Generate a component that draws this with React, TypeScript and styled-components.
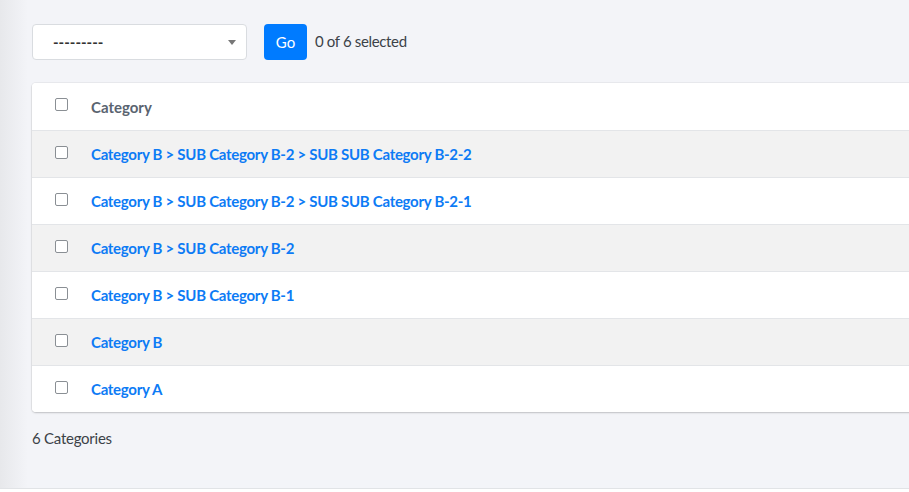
import React from "react";
import styled, { createGlobalStyle } from "styled-components";

const Global = createGlobalStyle`
  html, body { margin: 0; padding: 0; overflow: hidden; }
  body {
    background: #f3f4f8;
    font-family: "Lato", "Liberation Sans", sans-serif;
    color: #333a40;
  }
`;

const Page = styled.div`
  width: 909px;
  height: 492px;
  display: flex;
  overflow: hidden;
  background: #f3f4f8;
`;

const SideShade = styled.div`
  flex: 0 0 28px;
  background: linear-gradient(to right, #e7e8eb, #f3f4f8);
`;

const Main = styled.div`
  flex: 1;
  display: flex;
  flex-direction: column;
  padding: 24px 0 0 4px;
  min-width: 0;
`;

const Actions = styled.div`
  display: flex;
  align-items: center;
  height: 36px;
`;

const Select = styled.div`
  height: 34px;
  border: 1px solid #d9dce0;
  border-radius: 4px;
  background: #fff;
  display: flex;
  align-items: center;
  justify-content: space-between;
  padding: 0 10px 0 20px;
  box-sizing: content-box;
  width: 183px;
  font-size: 15px;
  font-weight: 700;
  color: #333;
`;

const Caret = styled.span`
  width: 0;
  height: 0;
  border-left: 4px solid transparent;
  border-right: 4px solid transparent;
  border-top: 5px solid #777;
`;

const GoButton = styled.button`
  margin-left: 17px;
  width: 43px;
  height: 36px;
  border: none;
  border-radius: 4px;
  background: #007bff;
  color: #fff;
  font-family: inherit;
  font-size: 15px;
  padding: 0;
`;

const Counter = styled.span`
  margin-left: 8px;
  font-size: 15px;
  letter-spacing: -0.35px;
  color: #3c4248;
  margin-top: -2px;
`;

const Card = styled.div`
  margin-top: 23px;
  margin-right: -30px;
  background: #fff;
  border-radius: 4px;
  box-shadow: 0 1px 2px rgba(0, 0, 0, 0.18), 0 0 0 1px rgba(0, 0, 0, 0.04);
  overflow: hidden;
`;

const Row = styled.div<{ $striped?: boolean; $first?: boolean }>`
  height: 47px;
  display: flex;
  align-items: center;
  background: ${(p) => (p.$striped ? "#f2f2f2" : "#fff")};
  border-top: ${(p) => (p.$first ? "none" : "1px solid #e3e5e8")};
  box-sizing: border-box;
`;

const CheckCell = styled.div`
  width: 59px;
  display: flex;
  justify-content: flex-start;
  padding-left: 23px;
  box-sizing: border-box;
  margin-top: -4px;
`;

const Check = styled.span`
  width: 11px;
  height: 11px;
  border: 1px solid #8a8f94;
  border-radius: 2px;
  background: #fff;
`;

const HeaderText = styled.span`
  font-size: 15px;
  font-weight: 700;
  color: #5a6470;
`;

const Link = styled.a`
  font-size: 15px;
  font-weight: 700;
  letter-spacing: -0.28px;
  color: #0d7bf5;
  text-decoration: none;
  margin-top: -1px;
`;

const Footer = styled.div`
  margin-top: 17px;
  font-size: 15px;
  letter-spacing: -0.25px;
  color: #3c4248;
`;

const BottomLine = styled.div`
  margin-top: auto;
  margin-left: -32px;
  height: 3px;
  border-top: 1px solid #e1e3e6;
  background: #fff;
`;

const rows = [
  "Category B > SUB Category B-2 > SUB SUB Category B-2-2",
  "Category B > SUB Category B-2 > SUB SUB Category B-2-1",
  "Category B > SUB Category B-2",
  "Category B > SUB Category B-1",
  "Category B",
  "Category A",
];

export default function App() {
  return (
    <Page>
      <Global />
      <SideShade />
      <Main>
        <Actions>
          <Select>
            <span>---------</span>
            <Caret />
          </Select>
          <GoButton>Go</GoButton>
          <Counter>0 of 6 selected</Counter>
        </Actions>
        <Card>
          <Row $first>
            <CheckCell>
              <Check />
            </CheckCell>
            <HeaderText>Category</HeaderText>
          </Row>
          {rows.map((r, i) => (
            <Row key={r} $striped={i % 2 === 0}>
              <CheckCell>
                <Check />
              </CheckCell>
              <Link href="#">{r}</Link>
            </Row>
          ))}
        </Card>
        <Footer>6 Categories</Footer>
        <BottomLine />
      </Main>
    </Page>
  );
}
